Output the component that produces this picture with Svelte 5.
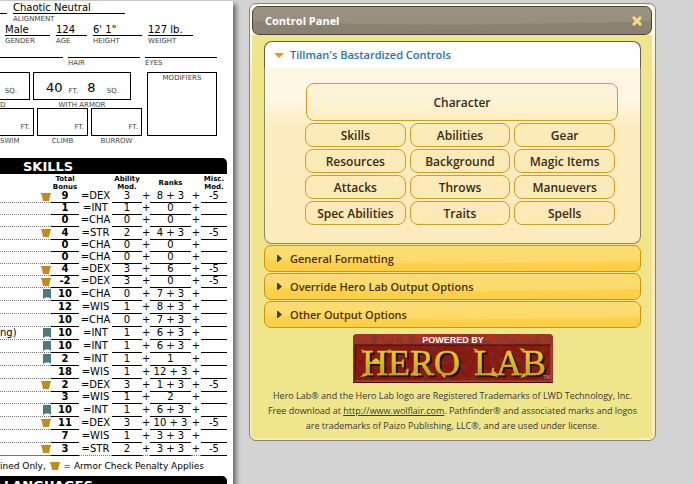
<script>
  const skills = [
    { icon: 'armor', total: '9', ability: 'DEX', mod: 3, ranks: '8 + 3', misc: '-5' },
    { total: '1', ability: 'INT', mod: 1, ranks: '0' },
    { total: '0', ability: 'CHA', mod: 0, ranks: '0' },
    { icon: 'armor', total: '4', ability: 'STR', mod: 2, ranks: '4 + 3', misc: '-5', tall: true },
    { total: '0', ability: 'CHA', mod: 0, ranks: '0' },
    { total: '0', ability: 'CHA', mod: 0, ranks: '0' },
    { icon: 'armor', total: '4', ability: 'DEX', mod: 3, ranks: '6', misc: '-5' },
    { icon: 'armor', total: '-2', ability: 'DEX', mod: 3, ranks: '0', misc: '-5' },
    { icon: 'trained', total: '10', ability: 'CHA', mod: 0, ranks: '7 + 3', tall: true },
    { total: '12', ability: 'WIS', mod: 1, ranks: '8 + 3', tall: true },
    { total: '10', ability: 'CHA', mod: 0, ranks: '7 + 3', tall: true },
    { name: 'ng)', icon: 'trained', total: '10', ability: 'INT', mod: 1, ranks: '6 + 3', tall: true },
    { icon: 'trained', total: '10', ability: 'INT', mod: 1, ranks: '6 + 3', tall: true },
    { icon: 'trained', total: '2', ability: 'INT', mod: 1, ranks: '1', tall: true },
    { total: '18', ability: 'WIS', mod: 1, ranks: '12 + 3', tall: true },
    { icon: 'armor', total: '2', ability: 'DEX', mod: 3, ranks: '1 + 3', misc: '-5', tall: true },
    { total: '3', ability: 'WIS', mod: 1, ranks: '2' },
    { icon: 'trained', total: '10', ability: 'INT', mod: 1, ranks: '6 + 3', tall: true },
    { icon: 'armor', total: '11', ability: 'DEX', mod: 3, ranks: '10 + 3', misc: '-5', tall: true },
    { total: '7', ability: 'WIS', mod: 1, ranks: '3 + 3', tall: true },
    { icon: 'armor', total: '3', ability: 'STR', mod: 2, ranks: '3 + 3', misc: '-5', tall: true }
  ];

  const sections = [
    'Skills', 'Abilities', 'Gear',
    'Resources', 'Background', 'Magic Items',
    'Attacks', 'Throws', 'Manuevers',
    'Spec Abilities', 'Traits', 'Spells'
  ];

  const collapsed = ['General Formatting', 'Override Hero Lab Output Options', 'Other Output Options'];
</script>

{#snippet armorIcon()}
  <svg class="icon" width="10" height="8" viewBox="0 0 10 8" aria-hidden="true">
    <path d="M0 0h10v1.5H9.3L8 8H2L.7 1.5H0z" fill="#c48a1a" />
  </svg>
{/snippet}

{#snippet trainedIcon()}
  <svg class="icon" width="8" height="10" viewBox="0 0 8 10" aria-hidden="true">
    <path d="M0 0h8v10L6 8.4H2.5L0 10z" fill="#4f7880" />
  </svg>
{/snippet}

<div class="page">
  <main class="sheet">
    <div class="fields first">
      <div class="field w-stub"><b>&nbsp;</b></div>
      <div class="field w-align"><b>Chaotic Neutral</b><small>ALIGNMENT</small></div>
    </div>
    <div class="fields second">
      <div class="field w-box"><b>Male</b><small>GENDER</small></div>
      <div class="field w-age"><b>124</b><small>AGE</small></div>
      <div class="field w-height"><b>6' 1"</b><small>HEIGHT</small></div>
      <div class="field w-box"><b>127 lb.</b><small>WEIGHT</small></div>
    </div>
    <div class="fields third">
      <div class="field w-left"><b>&nbsp;</b></div>
      <div class="field w-hair"><b>&nbsp;</b><small>HAIR</small></div>
      <div class="field w-hair"><b>&nbsp;</b><small>EYES</small></div>
    </div>

    <div class="speed">
      <div class="moves">
        <div class="move-row">
          <div class="move base"><div class="box"><small>SQ.</small></div><small class="edge">D</small></div>
          <div class="move armor">
            <div class="box"><b>40</b><small>FT.</small><b>8</b><small>SQ.</small></div>
            <small>WITH ARMOR</small>
          </div>
        </div>
        <div class="move-row">
          <div class="move swim"><div class="box"><small>FT.</small></div><small class="edge">SWIM</small></div>
          <div class="move other"><div class="box"><small>FT.</small></div><small>CLIMB</small></div>
          <div class="move other"><div class="box"><small>FT.</small></div><small>BURROW</small></div>
        </div>
      </div>
      <div class="modifiers"><small>MODIFIERS</small></div>
    </div>

    <h2 class="bar"><span>SKILLS</span></h2>
    <table>
      <colgroup>
        <col /><col class="c-total" /><col class="c-ability" /><col class="c-mod" /><col class="c-plus" />
        <col class="c-ranks" /><col class="c-plus2" /><col class="c-misc" />
      </colgroup>
      <thead>
        <tr>
          <td></td><th>Total<br />Bonus</th><td></td><th>Ability<br />Mod.</th><td></td>
          <th>Ranks</th><td></td><th>Misc.<br />Mod.</th>
        </tr>
      </thead>
      <tbody>
        {#each skills as s}
          <tr class:tall={s.tall}>
            <td class="name">
              <div>
                <span>{s.name ?? ''}</span>
                {#if s.icon === 'armor'}{@render armorIcon()}{:else if s.icon === 'trained'}{@render trainedIcon()}{/if}
              </div>
            </td>
            <td class="line total">{s.total}</td>
            <td class="gap">={s.ability}</td>
            <td class="line">{s.mod}</td>
            <td class="gap">+</td>
            <td class="line">{s.ranks}</td>
            <td class="gap">+</td>
            <td class="line">{s.misc ?? ''}</td>
          </tr>
        {/each}
      </tbody>
    </table>
    <p class="legend">ined Only, {@render armorIcon()} = Armor Check Penalty Applies</p>
    <h2 class="bar languages"><span>LANGUAGES</span></h2>
  </main>

  <section class="dialog" aria-labelledby="dialog-title">
    <header>
      <svg class="wave" viewBox="0 0 400 27" preserveAspectRatio="none" aria-hidden="true">
        <path d="M0 14Q130 19 260 17T400 14V0H0z" fill="#fff" fill-opacity=".09" />
      </svg>
      <h1 id="dialog-title">Control Panel</h1>
      <button class="close" aria-label="Close">
        <svg width="10" height="10" viewBox="0 0 10 10" aria-hidden="true">
          <path d="M2 2l6 6M8 2l-6 6" stroke="#fadc7a" stroke-width="3" stroke-linecap="square" />
        </svg>
      </button>
    </header>
    <div class="content">
      <button class="tab open" aria-expanded="true">
        <svg width="8" height="5" viewBox="0 0 8 5" aria-hidden="true"><path d="M0 0h8v1L4 5 0 1z" fill="#eb990f" /></svg>
        Tillman's Bastardized Controls
      </button>
      <div class="pane">
        <div class="wide"><button>Character</button></div>
        <div class="grid">
          {#each sections as label}<button>{label}</button>{/each}
        </div>
      </div>
      {#each collapsed as label}
        <button class="tab closed" aria-expanded="false">
          <svg class="wave" viewBox="0 0 376 25" preserveAspectRatio="none" aria-hidden="true">
            <path d="M0 13Q130 19 250 17T376 15V0H0z" fill="#fff" fill-opacity=".16" />
          </svg>
          <svg width="8" height="7" viewBox="0 0 8 7" aria-hidden="true"><path d="M2 0h1l4 3.5L3 7H2z" fill="#3d3d3d" /></svg>
          <span>{label}</span>
        </button>
      {/each}

      <svg class="logo" width="200" height="49" viewBox="0 0 200 49" role="img" aria-label="Powered by Hero Lab">
        <defs>
          <linearGradient id="gold" x1="0" y1="0" x2="0" y2="1">
            <stop offset="0" stop-color="#eadc3a" />
            <stop offset=".55" stop-color="#d3b91b" />
            <stop offset="1" stop-color="#a98c12" />
          </linearGradient>
          <filter id="grain" x="0" y="0" width="1" height="1">
            <feTurbulence type="fractalNoise" baseFrequency=".16" numOctaves="3" seed="4" />
            <feColorMatrix values="0 0 0 0 .14  0 0 0 0 .04  0 0 0 0 .03  1.9 0 0 0 -.8" />
          </filter>
          <clipPath id="plate"><path d="M0 49V4Q0 0 4 0h192q4 0 4 4v45z" /></clipPath>
        </defs>
        <g clip-path="url(#plate)">
          <rect width="200" height="49" fill="#a53526" />
          <rect x="2" y="11" width="196" height="36" fill="#8c160f" />
          <rect width="200" height="49" filter="url(#grain)" />
          <path d="M2 47V11h196" fill="none" stroke="#3d0d08" />
          <path d="M198 11v36H2" fill="none" stroke="#b44b37" />
          <path d="M0 48.5h200" stroke="#4a100b" />
        </g>
        <text x="100" y="9" class="powered">POWERED BY</text>
        <g class="brand"><text x="9" y="41">HERO</text><text x="121" y="41">LAB</text></g>
        <path
          d="M12 17l-4-2 2 5zM12 39l-5 4 7-1zM33 17l5-2-2 5zM57 41l8 1-3-6zM88 41l4 3 1-4zM122 17l-2-3 6 2zM136 41l9 2-3-6zM172 15l-6-1 4 4zM170 40l-3 4 7-2z"
          fill="#cbb21d"
        />
        <path d="M19 27l4-3 4 3-4 3z" fill="#dcc728" />
        <text x="190" y="45" class="tm">TM</text>
      </svg>
      <p class="notice">
        Hero Lab® and the Hero Lab logo are Registered Trademarks of LWD Technology, Inc.<br />
        Free download at <a href="http://www.wolflair.com">http://www.wolflair.com</a>. Pathfinder® and associated marks and logos<br />
        are trademarks of Paizo Publishing, LLC®, and are used under license.
      </p>
    </div>
  </section>
</div>

<style>
  :global(body) { margin: 0; background: #d3d3d3; }
  * { box-sizing: border-box; }
  h1, h2, p { margin: 0; }
  button { font: inherit; color: inherit; padding: 0; cursor: pointer; }

  .page {
    display: grid;
    grid-template-columns: 233px minmax(0, 1fr);
    align-items: start;
    column-gap: 16px;
    height: 100vh;
    padding: 1px 38px 0 0;
    overflow: hidden;
  }

  .sheet {
    min-height: 100vh;
    padding-right: 6px;
    background: #fff;
    box-shadow: 3px 3px 5px #666;
    font-family: "DejaVu Sans", sans-serif;
    font-size: 10px;
    color: #000;
  }
  small { display: block; font-size: 7px; line-height: 11px; color: #444; white-space: nowrap; }
  .fields { display: flex; gap: 6px; height: 22px; }
  .field b { display: block; height: 13px; border-bottom: 1px solid #000; font-weight: 400; font-size: 10px; line-height: 14px; white-space: nowrap; }
  .second { padding-left: 5px; }
  .third { height: 35px; gap: 5px; }
  .w-stub { width: 7px; }
  .w-align { width: 112px; }
  .w-box { width: 45px; }
  .w-age { width: 31px; }
  .w-height { width: 49px; }
  .w-left { width: 63px; }
  .w-hair { width: 72px; }

  .speed { display: flex; gap: 5px; height: 78px; margin-top: -8px; }
  .moves { display: flex; flex-direction: column; width: 142px; }
  .move-row { display: flex; gap: 3px; height: 36px; }
  .move { text-align: center; }
  .box { display: flex; align-items: center; justify-content: flex-end; height: 28px; border: 1px solid #000; }
  .box small { padding: 10px 3px 0 0; }
  .base { width: 30px; }
  .base .box, .swim .box { border-left: 0; }
  .base .box small { padding-right: 12px; }
  .armor { width: 98px; }
  .armor .box { justify-content: flex-start; gap: 6px; padding: 4px 8px 0 12px; }
  .armor .box small { padding-top: 6px; }
  .armor .box small:last-child { margin-left: auto; }
  .armor b { font-weight: 400; font-size: 13px; line-height: 16px; }
  .swim { width: 34px; }
  .other { width: 51px; }
  .edge { text-align: left; }
  .modifiers { width: 70px; height: 64px; border: 1px solid #000; text-align: center; }

  .bar { height: 16px; border-radius: 0 5px 0 0; background: #000; color: #fff; font-size: 13px; line-height: 17px; }
  .bar span { display: block; padding-left: 23px; }
  .speed + .bar { margin-top: 8px; }
  .languages span { padding: 1px 0 0 4px; }
  .legend { height: 20px; font-size: 9px; line-height: 20px; white-space: nowrap; }
  .legend .icon { margin: 0 1px; vertical-align: -1px; }

  table { width: 100%; table-layout: fixed; border-collapse: separate; border-spacing: 0; }
  .c-total { width: 28px; }
  .c-ability { width: 33px; }
  .c-mod { width: 30px; }
  .c-plus { width: 8px; }
  .c-ranks { width: 41px; }
  .c-plus2 { width: 10px; }
  .c-misc { width: 26px; }
  td, th { padding: 0; text-align: center; white-space: nowrap; }
  thead tr { height: 17px; }
  th { font-size: 7px; line-height: 8px; }
  tbody td { height: 12px; line-height: 10px; vertical-align: top; }
  .tall td { height: 13px; line-height: 11px; }
  .line { border-bottom: 1px solid #000; }
  .total { font-weight: 700; }
  .name { border-bottom: 1px dotted #777; }
  .name div { display: flex; align-items: center; justify-content: space-between; height: 11px; }
  .icon { flex: none; }
  tr:last-child .name { border-bottom-style: solid; }
  tr:last-child .gap { border-bottom: 1px dotted #777; }

  .dialog {
    margin-top: 2px;
    padding: 2px 3px 2px 2px;
    border: 1px solid #8e846b;
    border-radius: 7px;
    background: linear-gradient(#fff9e8 0, #fff9e8 35px, #feebbd 80px);
    font-family: "Open Sans", "Noto Sans", sans-serif;
    font-size: 11px;
    color: #383838;
  }
  header {
    position: relative;
    display: flex;
    align-items: center;
    justify-content: space-between;
    height: 29px;
    padding: 0 9px 0 12px;
    border: 1px solid #494437;
    border-radius: 7px;
    overflow: hidden;
    background: linear-gradient(#918a78, #888070);
    color: #fff;
  }
  h1 { position: relative; font-size: 11px; line-height: 16px; font-weight: 700; }
  .close { position: relative; width: 10px; height: 10px; border: 0; background: none; }
  .close svg, .logo { display: block; }
  .wave { position: absolute; inset: 0; width: 100%; height: 100%; }
  .content { display: flex; flex-direction: column; padding: 6px 11px 5px 12px; background: #efe58b; }
  .tab {
    position: relative;
    display: flex;
    align-items: center;
    gap: 7px;
    height: 27px;
    padding: 0 10px;
    border: 1px solid #d19405;
    border-radius: 7px;
    overflow: hidden;
    font-weight: 600;
    line-height: 16px;
  }
  .open { border-color: #655e4e; border-bottom: 0; border-radius: 8px 8px 0 0; background: #fff; color: #2074c7; }
  .closed { margin-top: 1px; background: linear-gradient(#fcd75b, #fdcf43); color: #4c3000; }
  .tab span, .tab svg:not(.wave) { position: relative; }
  .pane {
    padding: 15px 0 18px;
    border: 1px solid #8e846b;
    border-top: 0;
    border-radius: 0 0 8px 8px;
    background: linear-gradient(#fff7e3 0, #fff7e3 32px, #feecc0 60px, #feebbd);
    color: #3a2a10;
    font-weight: 600;
  }
  .pane button { padding-top: 2px; border: 1px solid #d19f1d; border-radius: 8px; background: rgb(240 230 140 / 14%); font-size: 12px; line-height: 16px; }
  .wide { display: grid; padding: 0 22px 0 41px; }
  .wide button { height: 38px; }
  .grid { display: grid; grid-template-columns: repeat(3, minmax(0, 1fr)); gap: 2px 4px; padding: 2px 25px 0 40px; }
  .grid button { height: 24px; }

  .logo { align-self: center; margin-top: 6px; }
  .powered { font: 700 9px "Liberation Sans", sans-serif; fill: #fff; text-anchor: middle; }
  .brand { font: 36px "Liberation Serif", serif; fill: url(#gold); stroke: #d3bd25; stroke-width: .6; filter: drop-shadow(2px 2px 0 #2b0a06); }
  .tm { font: 5px "Liberation Sans", sans-serif; fill: #c99; }
  .notice { padding-top: 5px; font-size: 9px; line-height: 15px; text-align: center; white-space: nowrap; }
  .notice a { color: inherit; }
</style>
